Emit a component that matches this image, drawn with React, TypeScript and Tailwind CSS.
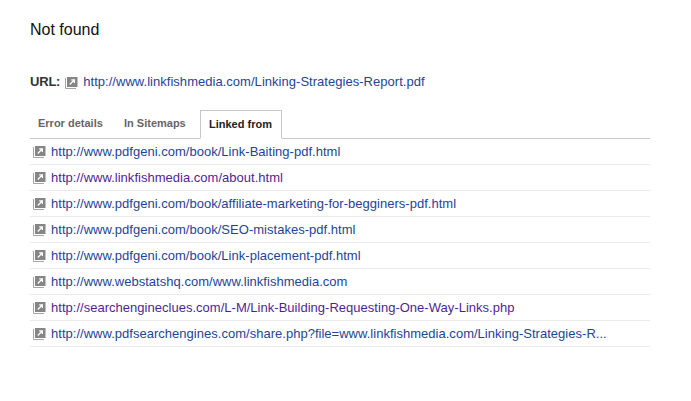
import React from "react";

const VISITED = "text-[#4f1f94]";
const LINK = "text-[#1f4496]";

const rows = [
  { url: "http://www.pdfgeni.com/book/Link-Baiting-pdf.html", color: LINK },
  { url: "http://www.linkfishmedia.com/about.html", color: VISITED },
  { url: "http://www.pdfgeni.com/book/affiliate-marketing-for-begginers-pdf.html", color: LINK },
  { url: "http://www.pdfgeni.com/book/SEO-mistakes-pdf.html", color: LINK },
  { url: "http://www.pdfgeni.com/book/Link-placement-pdf.html", color: LINK },
  { url: "http://www.webstatshq.com/www.linkfishmedia.com", color: LINK },
  { url: "http://searchengineclues.com/L-M/Link-Building-Requesting-One-Way-Links.php", color: VISITED },
  { url: "http://www.pdfsearchengines.com/share.php?file=www.linkfishmedia.com/Linking-Strategies-R...", color: LINK },
];

// little grey "open in new window" box
function OpenIcon() {
  return (
    <svg width="13" height="13" viewBox="0 0 13 13" className="shrink-0">
      <path d="M0.5 2v10.5H11" fill="none" stroke="#a5a5a5" strokeWidth="1" />
      <rect x="2" y="1" width="10.5" height="10" fill="#868686" />
      <path d="M4.8 8.5L9.2 4M6.2 3.8h3.2V7" fill="none" stroke="#fff" strokeWidth="1.2" />
    </svg>
  );
}

export default function App() {
  return (
    <div className="w-[691px] h-[401px] bg-white pl-[30px] pt-5 font-['Liberation_Sans',Arial,sans-serif] overflow-hidden">
      <h1 className="text-base leading-[19px] text-[#111]">Not found</h1>

      {/* URL line */}
      <div className="mt-[33px] flex items-center h-[20px] text-[13px]">
        <span className="font-bold text-[#333] tracking-[-0.2px]">URL:</span>
        <span className="ml-[5px] mr-[5px]">
          <OpenIcon />
        </span>
        <span className={`tracking-[0.03px] ${LINK}`}>http://www.linkfishmedia.com/Linking-Strategies-Report.pdf</span>
      </div>

      {/* Tabs */}
      <div className="mt-[18px] w-[620px] h-[29px] flex items-end border-b border-[#c8c8c8]">
        <div className="h-[29px] w-[94px] flex items-center pl-[8px] text-[11px] font-bold text-[#666]">Error details</div>
        <div className="h-[29px] w-[76px] flex items-center text-[11px] font-bold text-[#666]">In Sitemaps</div>
        <div className="h-[29px] w-[82px] -mb-px flex items-center pl-[8px] bg-white border border-b-white border-[#c8c8c8] text-[11px] font-bold text-[#222]">
          Linked from
        </div>
      </div>

      {/* Linked from rows */}
      <ul className="w-[620px]">
        {rows.map((row) => (
          <li key={row.url} className="h-[26px] flex items-center pl-[3px] border-b border-[#ebebeb] text-[13px]">
            <OpenIcon />
            <span className={`ml-[5px] whitespace-nowrap tracking-[0.02px] ${row.color}`}>{row.url}</span>
          </li>
        ))}
      </ul>
    </div>
  );
}
